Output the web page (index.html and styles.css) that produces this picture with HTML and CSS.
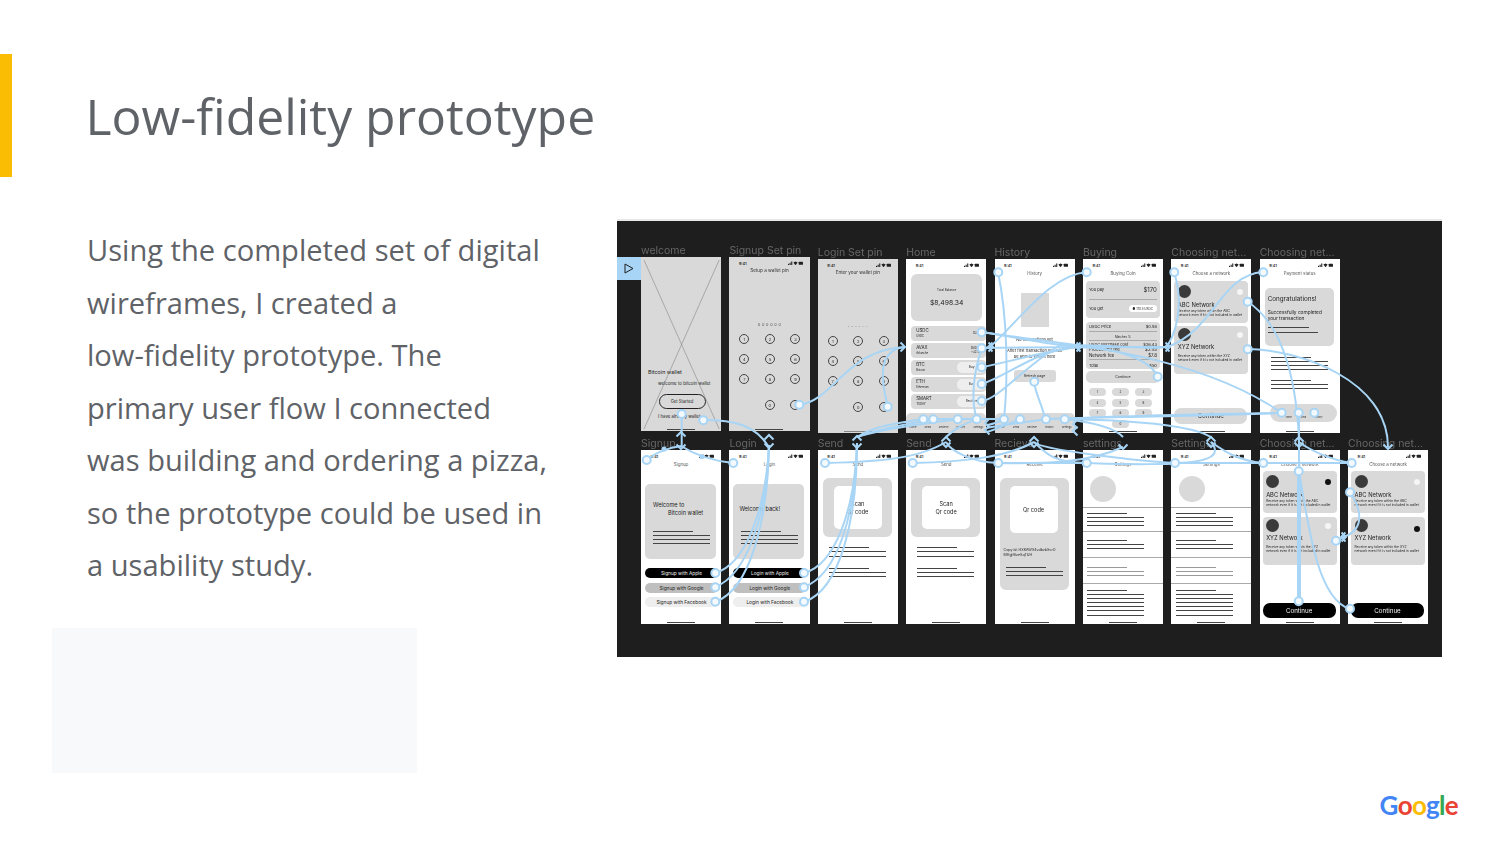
FILE: index.html
```html
<!DOCTYPE html>
<html lang="en">
<head>
  <meta charset="UTF-8">
  <title>Low-fidelity prototype</title>
  <link rel="stylesheet" href="styles.css">
</head>
<body>
  <div class="slide">
    <header class="slide-head">
      <div class="accent"></div>
      <h1>Low-fidelity prototype</h1>
    </header>

    <div class="slide-main">
      <div class="copy">
        <p>Using the completed set of digital<br>wireframes, I created a<br>low-fidelity prototype. The<br>primary user flow I connected<br>was building and ordering a pizza,<br>so the prototype could be used in<br>a usability study.</p>
        <div class="blank-box"></div>
      </div>

      <div class="board">
        <svg width="0" height="0" class="defs">
          <symbol id="sig" viewBox="0 0 14 4">
            <rect x="0" y="2.6" width="1" height="1.4" fill="#222"/>
            <rect x="1.5" y="1.6" width="1" height="2.4" fill="#222"/>
            <rect x="3" y="0.4" width="1" height="3.6" fill="#222"/>
            <path d="M5 1.4 L7 0.4 L9 1.4 L7 4Z" fill="#222"/>
            <rect x="10" y="0.6" width="4" height="3" rx="0.6" fill="#222"/>
          </symbol>
        </svg>

        <div class="tab">
          <svg width="10" height="11" viewBox="0 0 10 11"><path d="M1 1 L9 5.5 L1 10Z" fill="none" stroke="#1e1e1e" stroke-width="1"/></svg>
        </div>

        <!-- top row -->
        <div class="row">
          <div class="frame gray raised">
            <span class="label">welcome</span>
            <svg class="cross" viewBox="0 0 80 174" preserveAspectRatio="none"><path d="M3 3 L78 172 M78 3 L3 172" stroke="#777" stroke-width=".5" fill="none"/></svg>
            <p class="w-title">Bitcoin wallet</p>
            <p class="w-sub">welcome to bitcoin wallet</p>
            <div class="w-start">Get Started</div>
            <p class="w-have">I have already wallet</p>
            <div class="home-bar"></div>
          </div>

          <div class="frame gray raised">
            <span class="label">Signup Set pin</span>
            <div class="status"><span>9:41</span><svg class="sig"><use href="#sig"/></svg></div>
            <div class="title dark">Setup a wallet pin</div>
            <div class="pin">o o o o o o</div>
            <div class="keys">
              <span>1</span><span>2</span><span>3</span><span>4</span><span>5</span><span>6</span><span>7</span><span>8</span><span>9</span><span class="k0">0</span><span class="k-last"></span>
            </div>
            <div class="home-bar"></div>
          </div>

          <div class="frame gray">
            <span class="label">Login Set pin</span>
            <div class="status"><span>9:41</span><svg class="sig"><use href="#sig"/></svg></div>
            <div class="title dark">Enter your wallet pin</div>
            <div class="pin">- - - - - -</div>
            <div class="keys">
              <span>1</span><span>2</span><span>3</span><span>4</span><span>5</span><span>6</span><span>7</span><span>8</span><span>9</span><span class="k0">0</span><span class="k-last"></span>
            </div>
            <div class="home-bar mid"></div>
          </div>

          <div class="frame">
            <span class="label">Home</span>
            <div class="status"><span>9:41</span><svg class="sig"><use href="#sig"/></svg></div>
            <div class="balance"><small>Total Balance</small><b>$8,498.34</b></div>
            <div class="coin"><div><b>USDC</b><small>USDC</small></div><em>#32.5</em></div>
            <div class="coin"><div><b>AVAX</b><small>Avlanche</small></div><em>$40.47<br>+32.58</em></div>
            <div class="coin"><div><b>BTC</b><small>Bitcoin</small></div><i>Buy</i></div>
            <div class="coin"><div><b>ETH</b><small>Ethereum</small></div><i>Buy</i></div>
            <div class="coin"><div><b>SMART</b><small>TODAY</small></div><i>Recieve</i></div>
            <div class="nav"><span>Home</span><span>Send</span><span>Recieve</span><span>History</span><span>Settings</span></div>
          </div>

          <div class="frame">
            <span class="label">History</span>
            <div class="status"><span>9:41</span><svg class="sig"><use href="#sig"/></svg></div>
            <div class="title">History</div>
            <div class="h-square"></div>
            <p class="h-none">No transactions yet</p>
            <p class="h-text">After first transaction you will<br>be able to view it here</p>
            <div class="h-refresh">Refresh page</div>
            <div class="nav"><span>Home</span><span>Send</span><span>Recieve</span><span>History</span><span>Settings</span></div>
          </div>

          <div class="frame">
            <span class="label">Buying</span>
            <div class="status"><span>9:41</span><svg class="sig"><use href="#sig"/></svg></div>
            <div class="title">Buying Coin</div>
            <div class="b-card">
              <div class="b-row big"><span>You pay</span><b>$170</b></div>
              <div class="b-row"><span>You get</span><i>&#9679; 170.5 USDC</i></div>
            </div>
            <div class="b-card second">
              <div class="b-line ruled"><span>USDC Price</span><span>$0.98</span></div>
              <div class="b-center ruled">Matches %</div>
              <div class="b-line"><span>USDC Purchase cost</span><span>$26.43</span></div>
              <div class="b-line strong"><span>Processing fee</span><span>$3.99</span></div>
              <div class="b-line strong ruled"><span>Network fee</span><span>$7.8</span></div>
              <div class="b-line"><span>Total</span><span>$50</span></div>
            </div>
            <div class="b-btn">Continue</div>
            <div class="b-keys"><span>1</span><span>2</span><span>3</span><span>4</span><span>5</span><span>6</span><span>7</span><span>8</span><span>9</span><span class="k0">0</span></div>
            <div class="home-bar"></div>
          </div>

          <div class="frame">
            <span class="label">Choosing net...</span>
            <div class="status"><span>9:41</span><svg class="sig"><use href="#sig"/></svg></div>
            <div class="title">Choose a network</div>
            <div class="net first top-gap">
              <div class="net-head"><span class="dot"></span><span class="radio"></span></div>
              <b>ABC Network</b>
              <p>Receive any token within the ABC<br>network even if it is not included in wallet</p>
            </div>
            <div class="net tall">
              <div class="net-head"><span class="dot"></span><span class="radio"></span></div>
              <b>XYZ Network</b>
              <p>Receive any token within the XYZ<br>network even if it is not included in wallet</p>
            </div>
            <div class="cont gray-btn">Continue</div>
            <div class="home-bar"></div>
          </div>

          <div class="frame">
            <span class="label">Choosing net...</span>
            <div class="status"><span>9:41</span><svg class="sig"><use href="#sig"/></svg></div>
            <div class="title">Payment status</div>
            <div class="pay">
              <b>Congratulations!</b>
              <p>Successfully completed<br>your transaction</p>
              <div class="ln s"></div>
              <div class="ln"></div>
            </div>
            <div class="lines pay-lines"><div class="ln s"></div><div class="ln"></div><div class="ln"></div><div class="ln"></div></div>
            <div class="lines pay-lines2"><div class="ln s"></div><div class="ln"></div><div class="ln"></div></div>
            <div class="pay-nav"><span>Home</span><span>Send</span><span>History</span></div>
            <div class="home-bar"></div>
          </div>
        </div>

        <!-- bottom row -->
        <div class="row lower">
          <div class="frame">
            <span class="label">Signup</span>
            <div class="status"><span>9:41</span><svg class="sig"><use href="#sig"/></svg></div>
            <div class="title">Signup</div>
            <div class="auth-card">
              <p class="auth-hi">Welcome to<br><span>Bitcoin wallet</span></p>
              <div class="lines"><div class="ln s"></div><div class="ln"></div><div class="ln"></div><div class="ln"></div></div>
            </div>
            <div class="auth-btn black">Signup with Apple</div>
            <div class="auth-btn mid">Signup with Google</div>
            <div class="auth-btn light">Signup with Facebook</div>
            <div class="home-bar"></div>
          </div>

          <div class="frame">
            <span class="label">Login</span>
            <div class="status"><span>9:41</span><svg class="sig"><use href="#sig"/></svg></div>
            <div class="title">Login</div>
            <div class="auth-card">
              <p class="auth-hi back">Welcome back!</p>
              <div class="lines"><div class="ln s"></div><div class="ln"></div><div class="ln"></div><div class="ln"></div></div>
            </div>
            <div class="auth-btn black">Login with Apple</div>
            <div class="auth-btn mid">Login with Google</div>
            <div class="auth-btn light">Login with Facebook</div>
            <div class="home-bar"></div>
          </div>

          <div class="frame">
            <span class="label">Send</span>
            <div class="status"><span>9:41</span><svg class="sig"><use href="#sig"/></svg></div>
            <div class="title">Send</div>
            <div class="qr"><div class="qr-in">Scan<br>Qr code</div></div>
            <div class="lines qr-lines"><div class="ln s"></div><div class="ln gap"></div><div class="ln"></div></div>
            <div class="lines qr-lines2"><div class="ln s"></div><div class="ln"></div><div class="ln"></div></div>
            <div class="home-bar"></div>
          </div>

          <div class="frame">
            <span class="label">Send</span>
            <div class="status"><span>9:41</span><svg class="sig"><use href="#sig"/></svg></div>
            <div class="title">Send</div>
            <div class="qr"><div class="qr-in">Scan<br>Qr code</div></div>
            <div class="lines qr-lines"><div class="ln s"></div><div class="ln gap"></div><div class="ln"></div></div>
            <div class="lines qr-lines2"><div class="ln s"></div><div class="ln"></div><div class="ln"></div></div>
            <div class="home-bar"></div>
          </div>

          <div class="frame">
            <span class="label">Recieve</span>
            <div class="status"><span>9:41</span><svg class="sig"><use href="#sig"/></svg></div>
            <div class="title">Receive</div>
            <div class="qr long">
              <div class="qr-in">Qr code</div>
              <p>Copy id: HXKAWS4vdbvbSvrO<br>MHglf8zeSqTUH</p>
              <div class="lines"><div class="ln s"></div><div class="ln"></div><div class="ln"></div></div>
            </div>
            <div class="home-bar"></div>
          </div>

          <div class="frame">
            <span class="label">settings</span>
            <div class="status"><span>9:41</span><svg class="sig"><use href="#sig"/></svg></div>
            <div class="title">Settings</div>
            <div class="avatar"></div>
            <div class="set one"><div class="ln s"></div><div class="ln"></div><div class="ln"></div><div class="ln"></div></div>
            <div class="set two"><div class="ln s"></div><div class="ln"></div><div class="ln"></div></div>
            <div class="set three"><div class="ln s"></div><div class="ln"></div><div class="ln"></div></div>
            <div class="set four"><div class="ln s"></div><div class="ln"></div><div class="ln"></div><div class="ln"></div><div class="ln"></div><div class="ln"></div><div class="ln"></div></div>
            <div class="home-bar"></div>
          </div>

          <div class="frame">
            <span class="label">Settings</span>
            <div class="status"><span>9:41</span><svg class="sig"><use href="#sig"/></svg></div>
            <div class="title">Settings</div>
            <div class="avatar"></div>
            <div class="set one"><div class="ln s"></div><div class="ln"></div><div class="ln"></div><div class="ln"></div></div>
            <div class="set two"><div class="ln s"></div><div class="ln"></div><div class="ln"></div></div>
            <div class="set three"><div class="ln s"></div><div class="ln"></div><div class="ln"></div></div>
            <div class="set four"><div class="ln s"></div><div class="ln"></div><div class="ln"></div><div class="ln"></div><div class="ln"></div><div class="ln"></div><div class="ln"></div></div>
            <div class="home-bar"></div>
          </div>

          <div class="frame">
            <span class="label">Choosing net...</span>
            <div class="status"><span>9:41</span><svg class="sig"><use href="#sig"/></svg></div>
            <div class="title">Choose a network</div>
            <div class="net first">
              <div class="net-head"><span class="dot"></span><span class="radio on"></span></div>
              <b>ABC Network</b>
              <p>Receive any token within the ABC<br>network even if it is not included in wallet</p>
            </div>
            <div class="net tall">
              <div class="net-head"><span class="dot"></span><span class="radio"></span></div>
              <b>XYZ Network</b>
              <p>Receive any token within the XYZ<br>network even if it is not included in wallet</p>
            </div>
            <div class="cont">Continue</div>
            <div class="home-bar"></div>
          </div>

          <div class="frame">
            <span class="label">Choosing net...</span>
            <div class="status"><span>9:41</span><svg class="sig"><use href="#sig"/></svg></div>
            <div class="title">Choose a network</div>
            <div class="net first">
              <div class="net-head"><span class="dot"></span><span class="radio"></span></div>
              <b>ABC Network</b>
              <p>Receive any token within the ABC<br>network even if it is not included in wallet</p>
            </div>
            <div class="net tall">
              <div class="net-head"><span class="dot"></span><span class="radio on low"></span></div>
              <b>XYZ Network</b>
              <p>Receive any token within the XYZ<br>network even if it is not included in wallet</p>
            </div>
            <div class="cont">Continue</div>
            <div class="home-bar"></div>
          </div>
        </div>

        <!-- prototype connections, drawn in page coordinates -->
        <svg class="flows" viewBox="617 221 825 436">
          <defs>
            <path id="up" d="M-4.5 4.5L0 0L4.5 4.5"/>
            <path id="dn" d="M-4.5 -4.5L0 0L4.5 -4.5"/>
            <path id="rt" d="M-4.5 -4.5L0 0L-4.5 4.5"/>
            <path id="lf" d="M4.5 -4.5L0 0L4.5 4.5"/>
          </defs>
          <g class="wires">
            <path d="M681.7 414V446"/>
            <path d="M703 420C735 420 755 425 769 447"/>
            <path d="M799 405C835 400 845 350 905 347"/>
            <path d="M888 407C882 385 875 350 905 347"/>
            <path d="M715 573C745 565 766 510 769 445"/>
            <path d="M715 587C747 575 767 515 769 445"/>
            <path d="M715 602C750 590 768 520 769 445"/>
            <path d="M804 573C835 565 855 510 857 443"/>
            <path d="M804 587C837 575 856 515 857 443"/>
            <path d="M804 602C840 590 857 520 857 443"/>
            <path d="M647 460C652 455 665 448 681 446"/>
            <path d="M733 463C715 461 695 455 681 446"/>
            <path d="M825 463C880 462 920 458 946 442"/>
            <path d="M913 463C960 462 1005 458 1034 442"/>
            <path d="M998 463C1050 464 1090 462 1123 447"/>
            <path d="M998 463C970 462 950 450 946 442"/>
            <path d="M1087 463C1050 462 1045 452 1034 442"/>
            <path d="M998 463H1087"/>
            <path d="M1087 463C1130 465 1185 464 1175 463C1210 462 1222 455 1211 442"/>
            <path d="M1175 463C1140 461 1040 450 1034 442"/>
            <path d="M1263 463C1240 461 1225 452 1211 442"/>
            <path d="M1175 463H1352"/>
            <path d="M1352 463C1330 460 1310 450 1299 442"/>
            <path d="M923 419C900 423 875 425 857 437"/>
            <path d="M933 419C905 425 880 428 857 437"/>
            <path d="M958 419C925 424 890 427 857 437"/>
            <path d="M977 419C965 424 955 428 946 437"/>
            <path d="M923 419H1004"/>
            <path d="M1004 419C1000 421 995 424 987 425"/>
            <path d="M1020 419C1010 423 1000 428 987 432"/>
            <path d="M1046 419C1030 422 1000 425 987 428"/>
            <path d="M1065 419C1120 416 1200 414 1282 413"/>
            <path d="M1046 419C1120 417 1200 416 1282 413"/>
            <path d="M1065 419C1090 422 1115 428 1123 437"/>
            <path d="M1065 419C1120 420 1190 424 1211 437"/>
            <path d="M982 332C1020 338 1050 345 1078 347"/>
            <path d="M982 332C1060 345 1190 350 1282 413"/>
            <path d="M982 348C1030 347 1100 347 1167 347"/>
            <path d="M982 367C1010 362 1040 352 1078 347"/>
            <path d="M982 384C1010 375 1035 350 1078 347"/>
            <path d="M982 401C1000 398 1020 370 1060 345C1120 345 1150 350 1167 347"/>
            <path d="M982 348C974 370 970 400 977 419"/>
            <path d="M1087 272C1050 275 1020 320 990 347"/>
            <path d="M998 272C1008 320 1008 380 1004 419"/>
            <path d="M1174 272C1180 290 1183 320 1167 347"/>
            <path d="M1263 272C1220 275 1215 330 1167 347"/>
            <path d="M1158 377C1150 360 1120 348 1078 347"/>
            <path d="M1034 382C1036 395 1042 405 1044 415"/>
            <path d="M1248 302C1275 320 1295 360 1299 438"/>
            <path d="M1248 349C1300 350 1388 380 1388 447"/>
            <path d="M1299 413V471M1298 471V601M1300 471V601"/>
            <path d="M1350 609C1320 600 1310 540 1299 471"/>
            <path d="M1350 492C1362 510 1365 530 1343 537"/>
            <path d="M1336 541L1346 536"/>
          </g>
          <g class="wires heads">
            <use href="#up" x="681" y="432"/><use href="#dn" x="681" y="449"/>
            <use href="#up" x="769" y="435"/><use href="#dn" x="769" y="448"/>
            <use href="#up" x="857" y="436"/><use href="#dn" x="857" y="448"/>
            <use href="#up" x="946" y="437"/><use href="#dn" x="946" y="447"/>
            <use href="#up" x="1034" y="437"/><use href="#dn" x="1034" y="447"/>
            <use href="#dn" x="1123" y="449"/>
            <use href="#up" x="1211" y="437"/><use href="#dn" x="1211" y="447"/>
            <use href="#up" x="1299" y="437"/><use href="#dn" x="1299" y="447"/>
            <use href="#dn" x="1388" y="449"/>
            <use href="#rt" x="905" y="347"/>
            <use href="#lf" x="988" y="347"/><use href="#rt" x="993" y="347"/>
            <use href="#lf" x="1076" y="347"/><use href="#rt" x="1081" y="347"/>
            <use href="#lf" x="1165" y="347"/><use href="#rt" x="1170" y="347"/>
            <use href="#lf" x="1341" y="537"/><use href="#rt" x="1346" y="537"/>
            <use href="#lf" x="985" y="423"/><use href="#lf" x="985" y="430"/>
            <use href="#lf" x="1073" y="424"/><use href="#lf" x="1073" y="431"/>
          </g>
          <g class="bends">
            <circle cx="664" cy="449" r="2.6"/><circle cx="702" cy="456.5" r="2.6"/>
          </g>
          <g class="ports">
            <circle cx="681.7" cy="414" r="4"/><circle cx="703.3" cy="420.3" r="4"/>
            <circle cx="799.3" cy="404.7" r="4"/><circle cx="887.7" cy="406.7" r="4"/>
            <circle cx="981.7" cy="332.3" r="4"/><circle cx="981.7" cy="348.3" r="4"/>
            <circle cx="981.7" cy="367.3" r="4"/><circle cx="981.7" cy="384" r="4"/>
            <circle cx="981.7" cy="401" r="4"/><circle cx="998.3" cy="272.3" r="4"/>
            <circle cx="923.3" cy="419.3" r="4"/><circle cx="933.3" cy="419.3" r="4"/>
            <circle cx="957.7" cy="419.3" r="4"/><circle cx="976.7" cy="419.3" r="4"/>
            <circle cx="1004" cy="419.3" r="4"/><circle cx="1020" cy="419.3" r="4"/>
            <circle cx="1046" cy="419.3" r="4"/><circle cx="1064.7" cy="419.3" r="4"/>
            <circle cx="1034.3" cy="381.7" r="4"/><circle cx="1086.7" cy="272.3" r="4"/>
            <circle cx="1174.3" cy="272.3" r="4"/><circle cx="1263.3" cy="272.3" r="4"/>
            <circle cx="1157.7" cy="376.7" r="4"/><circle cx="1247.7" cy="301.7" r="4"/>
            <circle cx="1247.7" cy="349.3" r="4"/><circle cx="1281.7" cy="412.7" r="4"/>
            <circle cx="1298.7" cy="412.7" r="4"/><circle cx="1314.3" cy="412.7" r="4"/>
            <circle cx="646.7" cy="460" r="4"/><circle cx="733.3" cy="463" r="4"/>
            <circle cx="825" cy="463" r="4"/><circle cx="912.7" cy="463" r="4"/>
            <circle cx="998.3" cy="463" r="4"/><circle cx="715.3" cy="573" r="4"/>
            <circle cx="715.3" cy="587.3" r="4"/><circle cx="715.3" cy="601.7" r="4"/>
            <circle cx="804" cy="573" r="4"/><circle cx="804" cy="587.3" r="4"/>
            <circle cx="804" cy="601.7" r="4"/><circle cx="1086.7" cy="463" r="4"/>
            <circle cx="1175" cy="463" r="4"/><circle cx="1263.3" cy="463" r="4"/>
            <circle cx="1351.7" cy="463" r="4"/><circle cx="1298.7" cy="471.3" r="4"/>
            <circle cx="1350" cy="492.3" r="4"/><circle cx="1336" cy="540.7" r="4"/>
            <circle cx="1298.7" cy="601.3" r="4"/><circle cx="1350" cy="608.7" r="4"/>
          </g>
        </svg>
      </div>
    </div>

    <footer class="slide-foot">
      <div class="google"><span class="g-b">G</span><span class="g-r">o</span><span class="g-y">o</span><span class="g-b">g</span><span class="g-g">l</span><span class="g-r">e</span></div>
    </footer>
  </div>
</body>
</html>
```

FILE: styles.css
```css
* {
  box-sizing: border-box;
}

body {
  margin: 0;
  background-color: #ffffff;
  font-family: "Open Sans", sans-serif;
  color: #5f6368;
}

p {
  margin: 0;
}

.slide {
  width: 1500px;
  height: 844px;
  overflow: hidden;
  display: flex;
  flex-direction: column;
}

/* Slide header */
.slide-head {
  display: flex;
  align-items: center;
  margin-top: 54px;
  height: 123px;
}

.accent {
  width: 11.5px;
  height: 123px;
  background-color: #fbbc04;
}

h1 {
  margin: 0 0 0 74px;
  font-size: 49.9px;
  font-weight: 400;
  line-height: 1;
  position: relative;
  top: 1px;
}

/* Slide body */
.slide-main {
  display: flex;
  margin-top: 42px;
  height: 554px;
}

.copy {
  width: 617px;
  flex: none;
  padding: 5px 0 0 87px;
  font-size: 29.1px;
  line-height: 52.5px;
}

.blank-box {
  width: 365px;
  height: 145px;
  margin: 36.5px 0 0 -35px;
  background-color: #f8f9fa;
}

.slide-foot {
  display: flex;
  justify-content: flex-end;
  padding: 17px 42px 0 0;
}

.google {
  font-family: "Lato", sans-serif;
  font-size: 26px;
  font-weight: 700;
  line-height: 30px;
  letter-spacing: -0.7px;
}

.g-b { color: #4285f4; }
.g-r { color: #ea4335; }
.g-y { color: #fbbc05; }
.g-g { color: #34a853; }

/* Prototype board */
.board {
  position: relative;
  width: 825px;
  height: 438px;
  flex: none;
  padding: 38px 0 0 24px;
  background-color: #1e1e1e;
  border-top: 2px solid #e8e8e8;
  font-family: "Inter", sans-serif;
}

.defs {
  position: absolute;
}

.tab {
  position: absolute;
  left: 0;
  top: 36px;
  width: 24px;
  height: 23px;
  display: flex;
  align-items: center;
  justify-content: center;
  background-color: #a8d5f5;
}

.flows {
  position: absolute;
  left: 0;
  top: 0;
  width: 825px;
  height: 436px;
  filter: blur(0.25px);
}

.wires {
  fill: none;
  stroke: #a8d5f5;
  stroke-width: 2;
}

.bends circle {
  fill: #a8d5f5;
}

.ports circle {
  fill: #f4f9fd;
  stroke: #a8d5f5;
  stroke-width: 2;
}

.row {
  display: flex;
  gap: 8.2px;
  filter: blur(0.25px);
}

.row.lower {
  margin-top: 17px;
}

.frame {
  position: relative;
  width: 80.2px;
  height: 174px;
  flex: none;
  display: flex;
  flex-direction: column;
  background-color: #ffffff;
  color: #222222;
}

.frame.gray {
  background-color: #d9d9d9;
}

.frame.raised {
  margin-top: -2px;
}

.label {
  position: absolute;
  left: 0;
  bottom: 100%;
  font-size: 10.5px;
  line-height: 13px;
  color: #666666;
  white-space: nowrap;
}

.status {
  height: 9px;
  padding: 3px 7px 0 9.5px;
  display: flex;
  justify-content: space-between;
  align-items: center;
  font-size: 3.8px;
  font-weight: 600;
}

.sig {
  width: 15px;
  height: 4.3px;
}

.title {
  height: 8px;
  line-height: 11px;
  text-align: center;
  font-size: 4.4px;
  color: #555555;
}

.title.dark {
  font-size: 4.6px;
  line-height: 9px;
  color: #333333;
}

.home-bar {
  width: 28px;
  height: 1px;
  margin: auto auto 1px;
  background-color: #444444;
  flex: none;
}

.home-bar.mid {
  background-color: #888888;
  height: 1.5px;
}

.cont + .home-bar,
.pay-nav + .home-bar {
  margin-top: 0;
}

.ln {
  width: 57px;
  height: 1px;
  margin-bottom: 3px;
  background-color: #444444;
}

.ln.s {
  width: 40px;
}

/* welcome */
.cross {
  position: absolute;
  left: 0;
  top: 0;
  width: 100%;
  height: 100%;
}

.w-title {
  margin: 112px 0 0 7px;
  font-size: 5.4px;
  line-height: 7px;
}

.w-sub {
  margin: 5px 0 0 17px;
  font-size: 4.4px;
  line-height: 6px;
  white-space: nowrap;
}

.w-start {
  width: 47px;
  height: 15px;
  margin: 7px 0 0 17.5px;
  border: 1px solid #222222;
  border-radius: 8px;
  font-size: 4.2px;
  line-height: 13px;
  text-align: center;
}

.w-have {
  margin: 5px 0 0 17px;
  font-size: 4.4px;
  line-height: 6px;
  white-space: nowrap;
}

/* pin screens */
.pin {
  margin-top: 48px;
  height: 5px;
  line-height: 5px;
  text-align: center;
  font-size: 4px;
  letter-spacing: .3px;
  color: #555555;
}

.keys {
  display: grid;
  grid-template-columns: repeat(3, 10px);
  gap: 10px 15.5px;
  margin: 7px 0 0 10px;
}

.keys span {
  width: 10px;
  height: 10px;
  border: 0.6px solid #444444;
  border-radius: 50%;
  font-size: 4px;
  line-height: 9px;
  text-align: center;
}

.keys .k0 {
  grid-column: 2;
  margin-top: 6px;
}

.keys .k-last {
  margin-top: 6px;
}

/* home */
.balance {
  width: 71px;
  height: 47px;
  margin: 6px 0 4.5px 5px;
  display: flex;
  flex-direction: column;
  align-items: center;
  justify-content: center;
  gap: 6px;
  border-radius: 6px;
  background-color: #d9d9d9;
}

.balance small {
  font-size: 3px;
}

.balance b {
  font-size: 6.8px;
  font-weight: 400;
}

.coin {
  width: 75px;
  height: 15px;
  margin: 0 0 2px 5px;
  padding: 0 0 0 5px;
  display: flex;
  align-items: center;
  justify-content: space-between;
  border-radius: 4px;
  background-color: #d9d9d9;
  font-size: 3.8px;
}

.coin b,
.coin small {
  display: block;
  font-weight: 400;
}

.coin b {
  font-size: 4.4px;
  line-height: 6px;
}

.coin small {
  font-size: 2.8px;
  line-height: 4px;
}

.coin em {
  font-style: normal;
  font-size: 3px;
  text-align: right;
  padding-right: 5px;
  line-height: 4px;
}

.coin i {
  width: 29px;
  height: 11px;
  font-style: normal;
  text-align: center;
  line-height: 11px;
  font-size: 3.2px;
  border-radius: 5px;
  background-color: #eeeeee;
}

.nav {
  height: 20px;
  margin-top: auto;
  padding: 12px 3px 0;
  display: flex;
  justify-content: space-between;
  background-color: #d9d9d9;
  border-radius: 5px 5px 0 0;
  font-size: 2.6px;
}

/* history */
.h-square {
  width: 28px;
  height: 34px;
  margin: 17px 0 0 26px;
  background-color: #d9d9d9;
}

.h-none {
  margin-top: 10px;
  font-size: 4px;
  line-height: 5px;
  text-align: center;
}

.h-text {
  margin-top: 5.5px;
  font-size: 4px;
  line-height: 6px;
  text-align: center;
  white-space: nowrap;
}

.h-refresh {
  width: 42px;
  height: 12px;
  margin: 10.5px auto 0;
  line-height: 12px;
  text-align: center;
  font-size: 3.4px;
  border-radius: 3px;
  background-color: #d9d9d9;
}

/* buying */
.b-card {
  width: 74px;
  height: 37px;
  margin: 5px 0 0 3px;
  padding: 0 3px;
  border-radius: 4px;
  background-color: #d9d9d9;
  font-size: 4px;
}

.b-card.second {
  height: 47px;
  margin-top: 4px;
  padding-top: 2px;
}

.b-row {
  height: 18.5px;
  display: flex;
  align-items: center;
  justify-content: space-between;
}

.b-row.big {
  border-bottom: .5px solid #aaaaaa;
}

.b-row b {
  font-size: 6px;
  font-weight: 400;
}

.b-row i {
  font-style: normal;
  font-size: 3px;
  padding: 1.5px 4px;
  border-radius: 4px;
  background-color: #ffffff;
  white-space: nowrap;
}

.b-line {
  display: flex;
  justify-content: space-between;
  line-height: 5.5px;
  white-space: nowrap;
}

.b-line.strong {
  font-size: 4.4px;
}

.ruled {
  border-bottom: .5px solid #aaaaaa;
  margin-bottom: 3px;
  padding-bottom: 1px;
}

.b-center {
  text-align: center;
  font-size: 3px;
  line-height: 4px;
}

.b-center.ruled {
  margin-bottom: 1px;
}

.b-btn {
  width: 74px;
  height: 12px;
  margin: 2px 0 0 3px;
  line-height: 12px;
  text-align: center;
  font-size: 3.6px;
  border-radius: 5px;
  background-color: #d9d9d9;
}

.b-keys {
  display: grid;
  grid-template-columns: repeat(3, 17px);
  gap: 2.5px 6px;
  margin: 5px 0 0 6px;
}

.b-keys span {
  height: 8px;
  line-height: 8px;
  text-align: center;
  font-size: 3px;
  border-radius: 4px;
  background-color: #d9d9d9;
}

.b-keys .k0 {
  grid-column: 2;
}

/* networks */
.net {
  width: 74px;
  height: 42px;
  margin: 0 0 4px 3px;
  padding: 4px 3.5px 0;
  border-radius: 4px;
  background-color: #d9d9d9;
}

.net.first {
  margin-top: 4px;
}

.net.top-gap {
  margin-top: 5px;
  margin-bottom: 3px;
}

.net.tall {
  height: 48px;
  padding-top: 2px;
}

.net-head {
  height: 13px;
  display: flex;
  justify-content: space-between;
  align-items: center;
}

.dot {
  width: 13px;
  height: 13px;
  border-radius: 50%;
  background-color: #3a3a3a;
}

.radio {
  width: 6px;
  height: 6px;
  margin-right: 2px;
  border-radius: 50%;
  background-color: #f5f5f5;
}

.radio.on {
  background-color: #111111;
}

.radio.low {
  position: relative;
  top: 3px;
}

.net b {
  display: block;
  margin-top: 3px;
  font-size: 5.8px;
  font-weight: 400;
  line-height: 7px;
}

.net.tall b {
  margin-top: 2px;
}

.net p {
  margin-top: 1px;
  font-size: 3.3px;
  line-height: 4px;
  white-space: nowrap;
}

.net.tall p {
  margin-top: 3.7px;
}

.cont {
  width: 73px;
  height: 15px;
  margin: auto 0 4px 3px;
  line-height: 15px;
  text-align: center;
  font-size: 6.2px;
  color: #f2f2f2;
  border-radius: 7px;
  background-color: #000000;
}

.cont.gray-btn {
  height: 16px;
  line-height: 16px;
  margin-bottom: 7px;
  color: #222222;
  background-color: #d9d9d9;
}

/* payment */
.pay {
  width: 69px;
  height: 58px;
  margin: 12px 0 0 5px;
  padding: 7px 3px 0;
  border-radius: 5px;
  background-color: #d9d9d9;
}

.pay b {
  display: block;
  font-size: 6.3px;
  font-weight: 400;
  line-height: 9px;
}

.pay p {
  margin: 5px 0 6px;
  font-size: 4.8px;
  line-height: 6px;
  white-space: nowrap;
}

.pay .ln {
  width: 50px;
  margin-bottom: 4px;
}

.pay .ln.s {
  width: 41px;
}

.pay-lines {
  margin: 11px 0 0 11px;
}

.pay-lines2 {
  margin: 7px 0 0 11px;
}

.pay-nav {
  width: 67px;
  height: 18px;
  margin: auto 0 9px 10px;
  padding-top: 12px;
  padding-left: 16px;
  display: flex;
  gap: 9px;
  font-size: 2.2px;
  border-radius: 9px;
  background-color: #d9d9d9;
}

/* signup and login */
.auth-card {
  width: 71px;
  height: 75px;
  margin: 17px 0 9px 4px;
  padding: 18px 8px 0;
  border-radius: 5px;
  background-color: #d9d9d9;
}

.auth-hi {
  height: 29px;
  font-size: 5.6px;
  line-height: 7.5px;
  white-space: nowrap;
}

.auth-hi span {
  margin-left: 15px;
}

.auth-hi.back {
  padding-top: 4px;
  margin-left: -2px;
}

.auth-btn {
  width: 73px;
  height: 10px;
  margin: 0 0 4.5px 4px;
  line-height: 10px;
  text-align: center;
  font-size: 4.8px;
  border-radius: 5px;
}

.auth-btn.black {
  background-color: #000000;
  color: #eeeeee;
}

.auth-btn.mid {
  background-color: #bfbfbf;
}

.auth-btn.light {
  background-color: #eeeeee;
}

/* qr screens */
.qr {
  width: 69px;
  height: 59px;
  margin: 11px 0 0 5px;
  padding: 8px 11px 0;
  border-radius: 6px;
  background-color: #d9d9d9;
}

.qr-in {
  width: 48px;
  height: 43px;
  display: flex;
  align-items: center;
  justify-content: center;
  text-align: center;
  font-size: 5.6px;
  line-height: 8px;
  border-radius: 5px;
  background-color: #ffffff;
}

.qr-lines {
  margin: 10px 0 0 11px;
}

.qr-lines .ln.gap {
  margin-bottom: 4px;
}

.qr-lines2 {
  margin: 8px 0 0 11px;
}

.qr.long {
  height: 112px;
  padding-left: 0;
  padding-right: 0;
}

.qr.long .qr-in {
  margin-left: 10px;
  height: 47px;
}

.qr.long p {
  margin: 15px 0 0 4px;
  font-size: 3.6px;
  line-height: 5px;
  white-space: nowrap;
}

.qr.long .lines {
  margin: 9px 0 0 6px;
}

/* settings */
.avatar {
  width: 26px;
  height: 26px;
  margin: 9px 0 5px 7.5px;
  flex: none;
  border-radius: 50%;
  background-color: #d9d9d9;
}

.set {
  padding: 5px 0 0 4.5px;
  border-top: 1px solid #aaaaaa;
}

.set.one {
  height: 24px;
}

.set.two {
  height: 26px;
  padding-top: 8px;
}

.set.three {
  height: 26px;
  padding-top: 9px;
}

.set.three .ln {
  background-color: #999999;
}

.set.four {
  padding-top: 6px;
  height: 33px;
}

.set.four .ln {
  margin-bottom: 3.1px;
}
```
